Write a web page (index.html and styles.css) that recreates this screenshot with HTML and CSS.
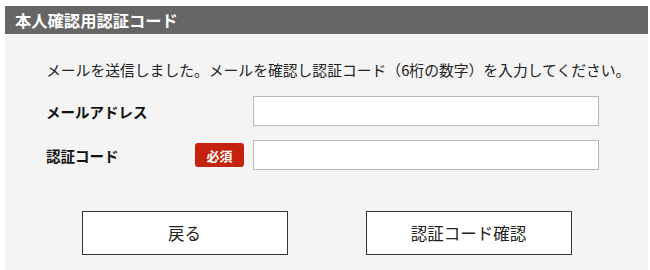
FILE: index.html
```html
<!DOCTYPE html>
<html lang="ja">
<head>
    <meta charset="UTF-8">
    <meta name="viewport" content="width=device-width, initial-scale=1.0">
    <title>本人確認用認証コード</title>
    <link rel="stylesheet" href="styles.css">
</head>
<body>
    <div class="container">
        <h1 class="panel-title">本人確認用認証コード</h1>

        <div class="panel">
            <p class="message">メールを送信しました。メールを確認し認証コード（6桁の数字）を入力してください。</p>

            <div class="form">
                <label class="form-label" for="mailInput">メールアドレス</label>
                <span></span>
                <input type="text" id="mailInput" class="form-input">

                <label class="form-label" for="codeInput">認証コード</label>
                <span class="required">必須</span>
                <input type="text" id="codeInput" class="form-input">
            </div>

            <div class="actions">
                <button class="btn">戻る</button>
                <button class="btn">認証コード確認</button>
            </div>
        </div>
    </div>
</body>
</html>
```

FILE: styles.css
```css
* {
    margin: 0;
    padding: 0;
    box-sizing: border-box;
}

body {
    font-family: "Noto Sans CJK JP", "Noto Sans", sans-serif;
    background: #fff;
    color: #222;
    padding: 6px 2px 0 5px;
}

.container {
    width: 643px;
}

.panel-title {
    background: #666;
    color: #fff;
    font-size: 16.3px;
    font-weight: bold;
    height: 28px;
    line-height: 28px;
    padding-left: 10px;
}

.panel {
    background: #f4f4f4;
    padding: 26px 0 20px 41px;
    min-height: 240px;
}

.message {
    font-size: 14.8px;
    line-height: 20px;
    margin-bottom: 16px;
    white-space: nowrap;
}

.form {
    display: grid;
    grid-template-columns: 149px 58px 346px;
    grid-auto-rows: 30px;
    row-gap: 14px;
    align-items: center;
}

.form-label {
    font-size: 14.5px;
    font-weight: bold;
    color: #111;
}

.required {
    display: flex;
    align-items: center;
    justify-content: center;
    width: 49px;
    height: 24px;
    background: #c4220c;
    color: #fff;
    font-size: 13px;
    font-weight: bold;
    border-radius: 3px;
}

.form-input {
    width: 346px;
    height: 30px;
    border: 1px solid #b8b8b8;
    background: #fff;
    font-size: 14px;
    padding: 0 6px;
}

.form-input:focus {
    outline: none;
    border-color: #888;
}

.actions {
    display: flex;
    justify-content: center;
    gap: 78px;
    margin-top: 41px;
    margin-left: -41px;
}

.btn {
    width: 206px;
    height: 44px;
    background: #fff;
    border: 1px solid #333;
    font-family: inherit;
    font-size: 16.5px;
    color: #222;
    cursor: pointer;
}

.btn:hover {
    background: #f0f0f0;
}
```
